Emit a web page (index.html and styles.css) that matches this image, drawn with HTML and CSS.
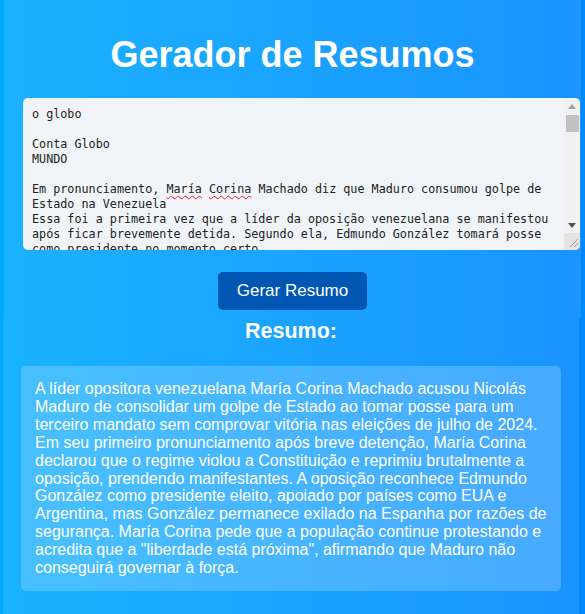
FILE: index.html
```html
<!DOCTYPE html>
<html lang="pt-BR">
<head>
<meta charset="utf-8">
<title>Gerador de Resumos</title>
<link rel="stylesheet" href="styles.css">
</head>
<body>
<main class="page">
  <section class="panel panel-input">
    <h1 class="title">Gerador de Resumos</h1>
    <div class="field">
      <div class="textbox" role="textbox" aria-multiline="true" spellcheck="false">o globo

Conta Globo
MUNDO

Em pronunciamento, <span class="typo">María</span> <span class="typo">Corina</span> Machado diz que Maduro consumou golpe de Estado na Venezuela
Essa foi a primeira vez que a líder da oposição venezuelana se manifestou após ficar brevemente detida. Segundo ela, Edmundo González tomará posse como presidente no momento certo.

Por O Globo — Caracas
10/01/2025 15h20  Atualizado há 2 horas

A líder opositora venezuelana María Corina Machado afirmou nesta sexta-feira que Nicolás Maduro consumou um golpe de Estado ao tomar posse para um terceiro mandato sem apresentar provas de sua vitória nas eleições de julho de 2024.

Em seu primeiro pronunciamento após ter sido brevemente detida, María Corina declarou que o regime violou a Constituição e reprimiu brutalmente a oposição, prendendo manifestantes e dirigentes políticos.

A oposição reconhece Edmundo González como presidente eleito, com o apoio de países como Estados Unidos e Argentina. González, no entanto, permanece exilado na Espanha por razões de segurança.

— A liberdade está próxima. Maduro não conseguirá governar à força — disse María Corina, que pediu à população que continue protestando nas ruas de todo o país.
</div>
      <div class="scrollbar" aria-hidden="true">
        <span class="sb-btn">
          <svg width="8" height="5" viewBox="0 0 8 5"><path d="M0 5 L4 0 L8 5 Z" fill="#a3a3a3"/></svg>
        </span>
        <span class="sb-track"><span class="sb-thumb"></span></span>
        <span class="sb-btn">
          <svg width="8" height="5" viewBox="0 0 8 5"><path d="M0 0 L8 0 L4 5 Z" fill="#505050"/></svg>
        </span>
        <span class="sb-corner">
          <svg width="16" height="16" viewBox="0 0 16 16"><path d="M6 14 L14 6 M10 14 L14 10" stroke="#9a9a9a" stroke-width="1" fill="none"/></svg>
        </span>
      </div>
    </div>
    <div class="actions">
      <button class="btn" type="button">Gerar Resumo</button>
    </div>
  </section>
  <section class="panel panel-output">
    <h2 class="subtitle">Resumo:</h2>
    <div class="summary">A líder opositora venezuelana María Corina Machado acusou Nicolás Maduro de consolidar um golpe de Estado ao tomar posse para um terceiro mandato sem comprovar vitória nas eleições de julho de 2024. Em seu primeiro pronunciamento após breve detenção, María Corina declarou que o regime violou a Constituição e reprimiu brutalmente a oposição, prendendo manifestantes. A oposição reconhece Edmundo González como presidente eleito, apoiado por países como EUA e Argentina, mas González permanece exilado na Espanha por razões de segurança. María Corina pede que a população continue protestando e acredita que a "liberdade está próxima", afirmando que Maduro não conseguirá governar à força.</div>
  </section>
</main>
</body>
</html>
```

FILE: styles.css
```css
html,
body {
  margin: 0;
  padding: 0;
}

body {
  min-height: 100vh;
  overflow: hidden;
  background: linear-gradient(to right, #00aaff, #0088ff);
  font-family: "Liberation Sans", Arial, sans-serif;
  color: #ffffff;
}

.panel {
  box-sizing: border-box;
  background: rgba(255, 255, 255, 0.1);
}

.panel-input {
  margin-left: 4px;
  width: 577px;
  padding: 34px 19px 8px;
}

.title {
  margin: 0 0 22px;
  font-size: 36px;
  font-weight: bold;
  line-height: normal;
  text-align: center;
}

.field {
  position: relative;
  margin-right: -18px;
  height: 152px;
  border-radius: 5px;
  overflow: hidden;
  background: #f0f4f8;
}

.textbox {
  box-sizing: border-box;
  width: 100%;
  height: 100%;
  padding: 9px 25px 9px 9px;
  color: #222222;
  font-family: "DejaVu Sans Mono", "Liberation Mono", monospace;
  font-size: 11.75px;
  line-height: 15px;
  white-space: pre-wrap;
  overflow: hidden;
}

.typo {
  text-decoration: underline wavy #e02020;
  text-decoration-thickness: 1px;
  text-underline-offset: 2px;
}

.scrollbar {
  position: absolute;
  top: 0;
  right: 0;
  bottom: 0;
  width: 16px;
  display: flex;
  flex-direction: column;
  background: #f1f1f1;
}

.sb-btn {
  height: 16px;
  display: flex;
  align-items: center;
  justify-content: center;
  flex: none;
}

.sb-track {
  flex: 1;
  display: flex;
  flex-direction: column;
}

.sb-thumb {
  height: 17px;
  margin: 1px 1px 0 2px;
  background: #c1c1c1;
}

.sb-corner {
  height: 17px;
  flex: none;
  background: #e4e4e4;
  display: flex;
}

.actions {
  margin-top: 22px;
  text-align: center;
}

.btn {
  height: 38px;
  padding: 0 19px;
  border: none;
  border-radius: 5px;
  background: #0056b3;
  color: #ffffff;
  font-family: "Liberation Sans", Arial, sans-serif;
  font-size: 17px;
  vertical-align: top;
}

.panel-output {
  margin-left: 3px;
  width: 576px;
  padding: 1px 18px 40px;
}

.subtitle {
  margin: 0 0 22px;
  font-size: 21.5px;
  font-weight: bold;
  line-height: normal;
  text-align: center;
}

.summary {
  padding: 14px;
  border-radius: 5px;
  background: rgba(255, 255, 255, 0.2);
  font-size: 16px;
  line-height: 17.9px;
}
```
